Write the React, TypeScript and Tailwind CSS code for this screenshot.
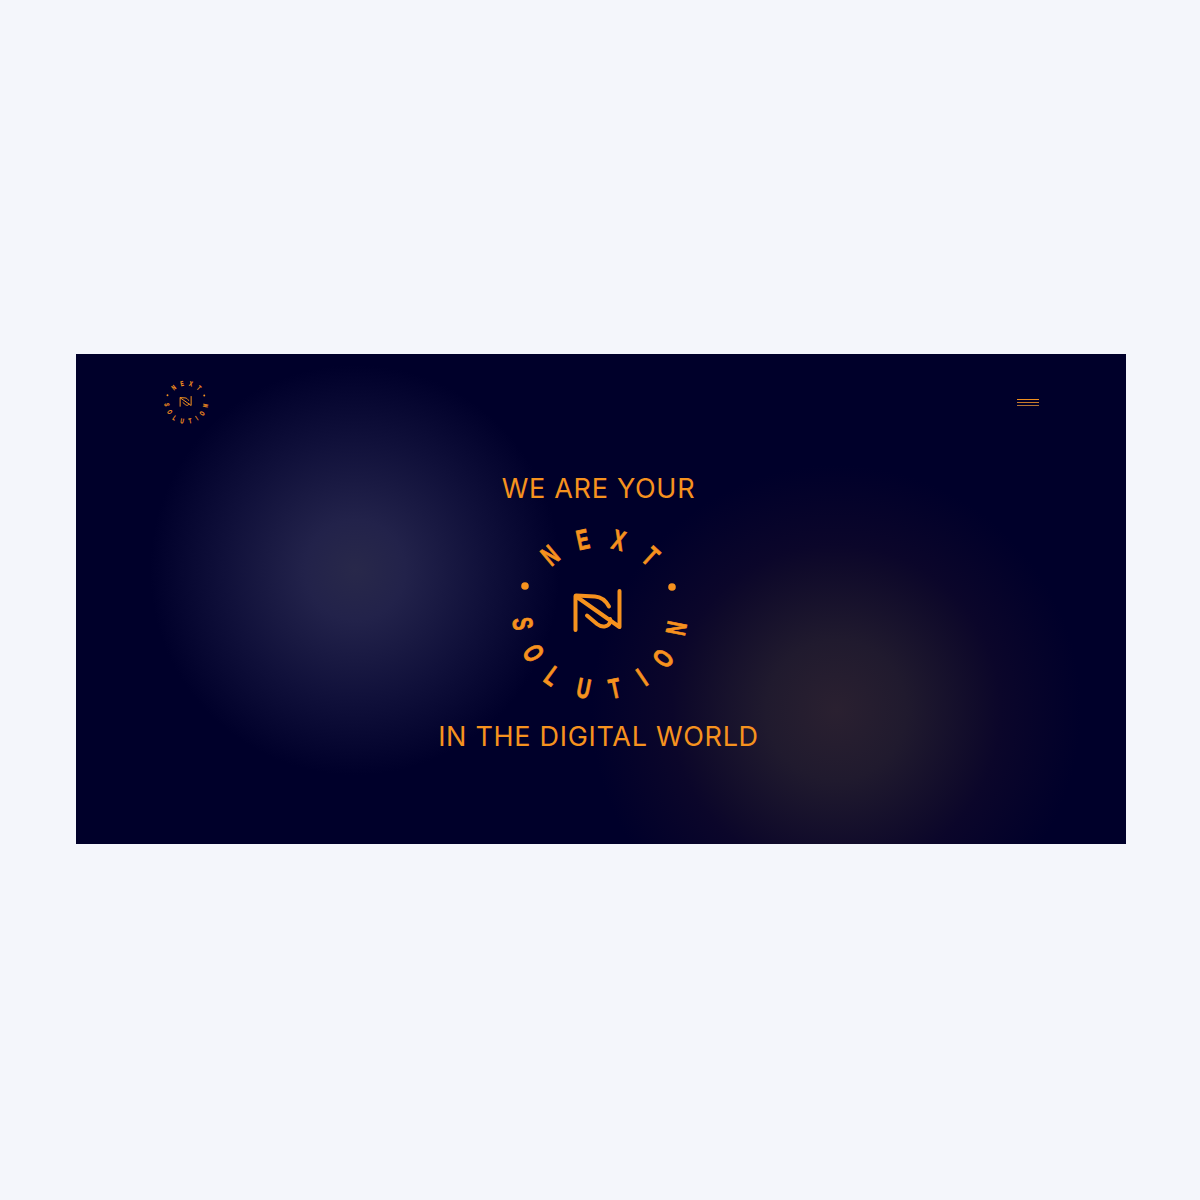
import React from "react";

const orange = "#f6921e";

// letter centres are relative to the middle of a 200x200 badge
const letters: [string, number, number, boolean][] = [
  ["N", -49, -58, true],
  ["E", -16, -74, true],
  ["X", 20, -73, true],
  ["T", 52, -57, true],
  ["N", 77, 15, false],
  ["O", 64, 45, false],
  ["I", 43, 64, false],
  ["T", 16, 75, false],
  ["U", -15, 75, false],
  ["L", -46, 63, false],
  ["O", -65, 40, false],
  ["S", -76, 11, false],
];

function Badge({ className }: { className: string }) {
  return (
    <svg viewBox="0 0 200 200" className={className} fill="none">
      <g transform="translate(100 100)">
        {letters.map(([ch, x, y, top], i) => {
          const rot = top
            ? (Math.atan2(x, -y) * 180) / Math.PI
            : (Math.atan2(-x, y) * 180) / Math.PI;
          return (
            <text
              key={i}
              transform={`translate(${x} ${y}) rotate(${rot}) scale(0.66 1)`}
              y="10"
              textAnchor="middle"
              fontFamily="'Liberation Sans', sans-serif"
              fontWeight="700"
              fontSize="28"
              fill={orange}
              stroke={orange}
              strokeWidth="0.8"
            >
              {ch}
            </text>
          );
        })}
        <circle cx="-74" cy="-27" r="3.8" fill={orange} />
        <circle cx="73" cy="-26" r="3.8" fill={orange} />
        <path
          d="M-23.5 17V-17L20.5 14V-22"
          stroke={orange}
          strokeWidth="4"
          strokeLinecap="round"
          strokeLinejoin="round"
        />
        <path
          d="M-23 -17.5L-4 -16.5C3 -16 7 -12 10 -6.5M-12 2.5L-2 11C3 15 9 14 11 9.5C11.5 8 11.5 7 11 6"
          stroke={orange}
          strokeWidth="4"
          strokeLinecap="round"
        />
      </g>
    </svg>
  );
}

export default function App() {
  return (
    <div className="h-[1200px] bg-[#f4f6fb] pl-[76px] pt-[354px]">
      <section className="h-[490px] w-[1050px] bg-[#00002a] bg-[radial-gradient(circle_at_279px_216px,#28284a_0%,#22224a_50px,#10103a_130px,#00002a_205px),radial-gradient(circle_at_760px_356px,#2a2030_0%,#201a2e_70px,#0b0629_165px,#00002a_245px)] bg-blend-lighten">
        <header className="flex h-24 items-center justify-between pl-[85px] pr-[87px]">
          <Badge className="h-[50px] w-[50px]" />
          <div className="flex w-[22px] flex-col gap-[2px]">
            <span className="h-px bg-[#f0901e]" />
            <span className="h-px bg-[#c77a2a]" />
            <span className="h-px bg-[#b07438]" />
          </div>
        </header>
        <div
          className="flex flex-col items-center pr-[5px] text-[27px] leading-8 tracking-[0.7px] text-[#f6921e]"
          style={{ fontFamily: "Inter, sans-serif" }}
        >
          <h1 className="mt-[23px]">WE ARE YOUR</h1>
          <Badge className="mt-[8px] h-[200px] w-[200px]" />
          <p className="mt-[8px]">IN THE DIGITAL WORLD</p>
        </div>
      </section>
    </div>
  );
}
